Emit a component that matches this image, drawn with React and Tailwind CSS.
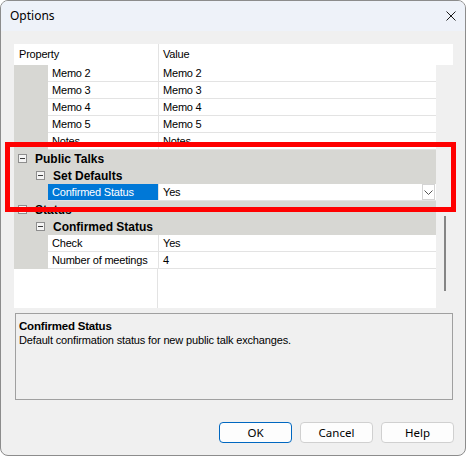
import React from "react";

const gridFont = { fontFamily: '"Liberation Sans", Arial, sans-serif' };

const MinusBox = () => (
  <span className="flex items-center justify-center w-[9px] h-[9px] border border-[#8e8e8e] bg-[#f4f4f4]">
    <span className="block w-[5px] h-px bg-[#3c3c3c]" />
  </span>
);

const Category = ({ label, level }) => (
  <div className="flex items-center h-[17px] bg-[#d7d7d3]">
    <div className={level === 1 ? "w-[4px]" : "w-[22px]"} />
    <MinusBox />
    <div className="w-[8px]" />
    <span className="text-[12px] font-bold text-black leading-none">{label}</span>
  </div>
);

const PropRow = ({ name, value, selected, dropdown }) => (
  <div className="flex h-[17px]">
    <div className="w-[34px] bg-[#d7d7d3]" />
    <div className="flex flex-1 border-b border-[#e3e3e3]">
      <div
        className={`w-[111px] flex items-center pl-[4px] border-r border-[#e3e3e3] text-[11px] tracking-[-0.2px] ${
          selected ? "bg-[#0078d7] text-white" : "bg-white text-black"
        }`}
      >
        {name}
      </div>
      <div className="flex flex-1 items-center bg-white pl-[4px] text-[11px] tracking-[-0.2px] text-black">
        <span className="flex-1">{value}</span>
        {dropdown && (
          <span className="flex items-center justify-center w-[13px] h-[16px] border border-[#d4d4d4] bg-white mr-px">
            <svg width="9" height="5" viewBox="0 0 9 5">
              <path d="M0.5 0.5 L4.5 4.5 L8.5 0.5" fill="none" stroke="#555" strokeWidth="1" />
            </svg>
          </span>
        )}
      </div>
    </div>
  </div>
);

const Button = ({ label, primary }) => (
  <button
    className={`w-[73px] h-[21px] rounded-[4px] bg-[#fdfdfd] text-[11.5px] text-black border ${
      primary ? "border-[#0067c0]" : "border-[#d0d0d0]"
    }`}
    style={{ fontFamily: '"Noto Sans", "Open Sans", sans-serif' }}
  >
    {label}
  </button>
);

export default function App() {
  return (
    <div className="relative w-[466px] h-[456px] overflow-hidden rounded-[8px] border border-[#8c8c8c] bg-[#f0f0f0]">
      {/* title bar */}
      <div
        className="flex items-center justify-between h-[30px] bg-[#eef2f9] pl-[9px] pr-[9px]"
        style={{ fontFamily: '"Noto Sans", "Open Sans", sans-serif' }}
      >
        <span className="text-[12px] text-black">Options</span>
        <svg width="10" height="10" viewBox="0 0 10 10">
          <path d="M0.5 0.5 L9.5 9.5 M9.5 0.5 L0.5 9.5" stroke="#1a1a1a" strokeWidth="1" />
        </svg>
      </div>

      <div className="pt-[13px] pl-[13px]" style={gridFont}>
        {/* property grid */}
        <div className="w-[439px]">
          <div className="flex h-[21px] bg-white text-[11px] tracking-[-0.2px] text-black">
            <div className="w-[145px] flex items-center pl-[5px] border-r border-[#e3e3e3]">Property</div>
            <div className="flex items-center pl-[4px]">Value</div>
          </div>
          <div className="flex h-[243px]">
            <div className="flex flex-col w-[422px] bg-white">
              <PropRow name="Memo 2" value="Memo 2" />
              <PropRow name="Memo 3" value="Memo 3" />
              <PropRow name="Memo 4" value="Memo 4" />
              <PropRow name="Memo 5" value="Memo 5" />
              <PropRow name="Notes" value="Notes" />
              <Category label="Public Talks" level={1} />
              <Category label="Set Defaults" level={2} />
              <PropRow name="Confirmed Status" value="Yes" selected dropdown />
              <Category label="Status" level={1} />
              <Category label="Confirmed Status" level={2} />
              <PropRow name="Check" value="Yes" />
              <PropRow name="Number of meetings" value="4" />
              <div className="flex flex-1">
                <div className="w-[144px] border-r border-[#e3e3e3]" />
              </div>
            </div>
            <div className="flex-1 bg-[#f0f0f0] pt-[151px] pl-[8px]">
              <div className="w-[2px] h-[75px] bg-[#858585]" />
            </div>
          </div>
        </div>

        {/* description */}
        <div className="mt-[5px] ml-px w-[438px] h-[87px] border border-[#a0a0a0] pt-[5px] pl-[3px] text-black">
          <div className="text-[11.5px] font-bold tracking-[-0.2px] leading-[14px]">Confirmed Status</div>
          <div className="text-[11px] tracking-[-0.15px] leading-[14px]">
            Default confirmation status for new public talk exchanges.
          </div>
        </div>

        {/* buttons */}
        <div className="flex justify-end gap-[8px] mt-[22px] w-[440px]">
          <Button label="OK" primary />
          <Button label="Cancel" />
          <Button label="Help" />
        </div>
      </div>

      {/* red highlight */}
      <div className="absolute left-[4px] top-[141px] w-[451px] h-[70px] border-[5px] border-[#ff0000]" />
    </div>
  );
}
